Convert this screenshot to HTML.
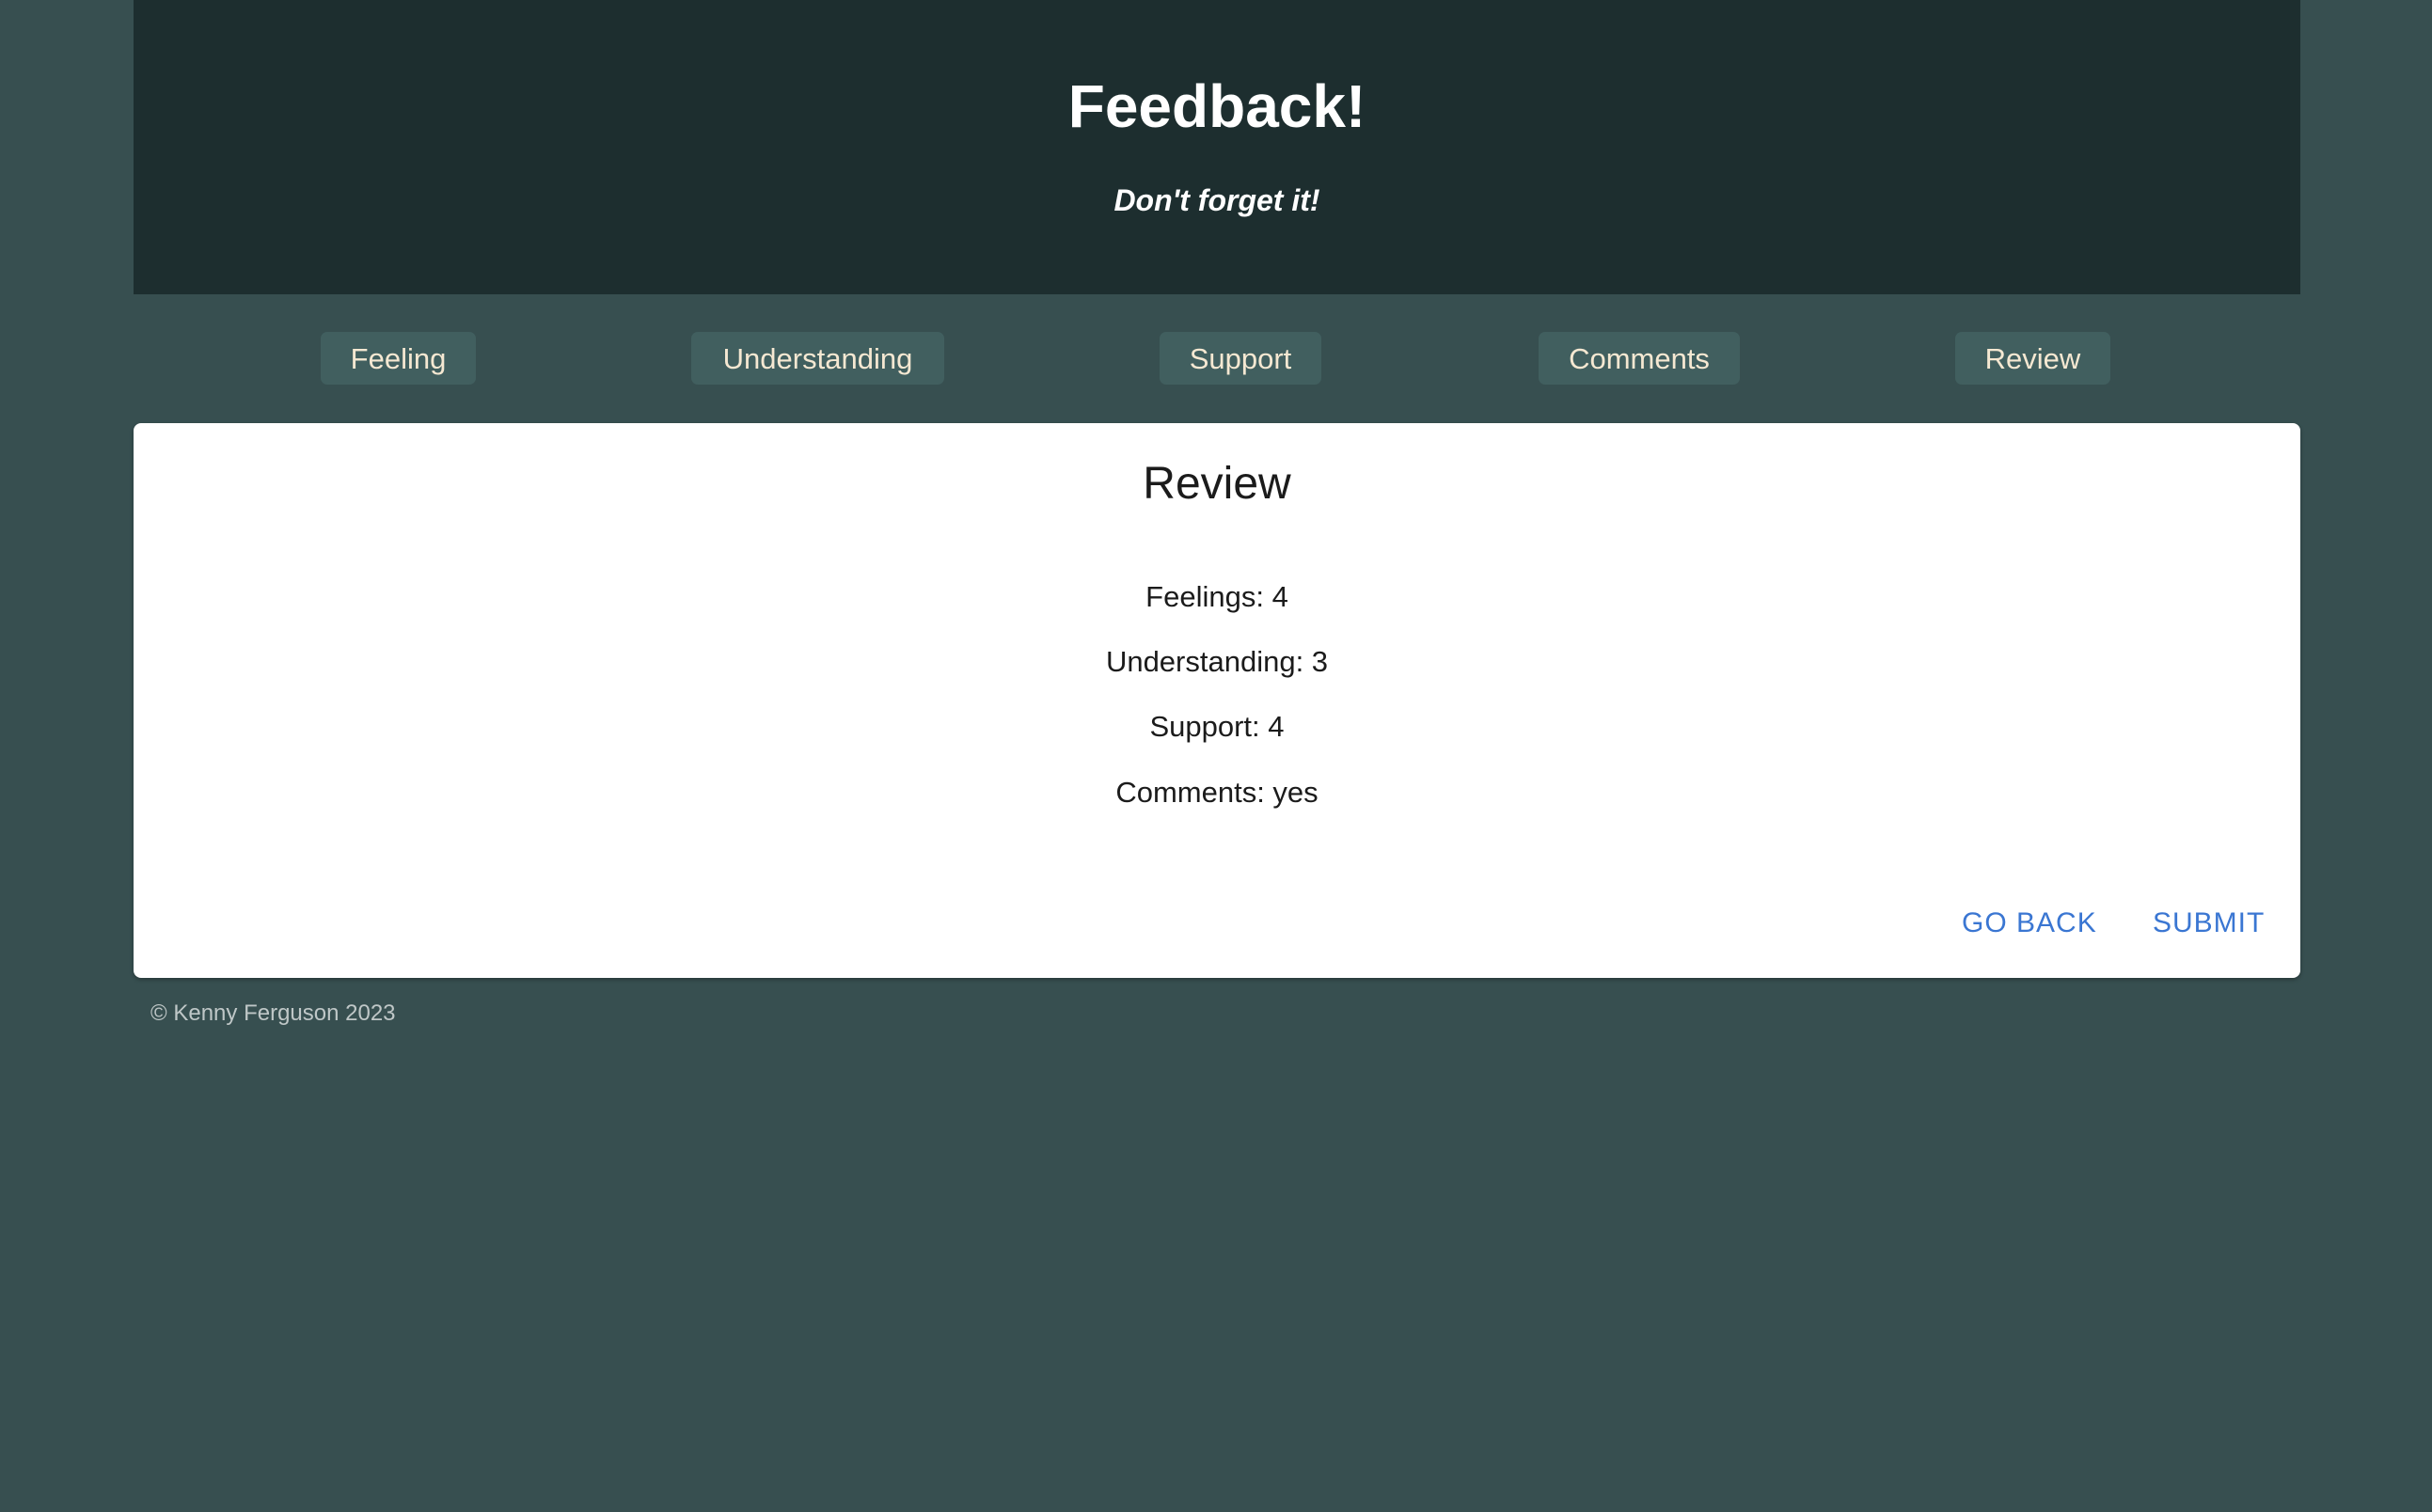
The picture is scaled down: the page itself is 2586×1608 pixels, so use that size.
<!DOCTYPE html>
<html><head><meta charset="utf-8"><style>
html,body{margin:0;padding:0;}
body{width:2586px;height:1608px;background:#374f50;font-family:"Liberation Sans",Arial,sans-serif;position:relative;overflow:hidden;}
.hdr{position:absolute;left:142px;top:0;width:2304px;height:313px;background:#1d2e2f;color:#fff;text-align:center;}
.hdr h1{position:absolute;left:0;right:0;top:76px;margin:0;font-size:64px;font-weight:bold;}
.hdr p{position:absolute;left:0;right:0;top:195px;margin:0;font-size:32px;font-weight:bold;font-style:italic;}
.nav{position:absolute;top:353px;height:56px;background:#415f5f;color:#f5e8d2;border-radius:7px;font-size:31px;line-height:58px;text-align:center;}
.card{position:absolute;left:142px;top:450px;width:2304px;height:590px;background:#fff;border-radius:8px;box-shadow:0 2px 4px rgba(0,0,0,.3);}
.line{position:absolute;left:0;right:0;font-size:31px;}
.btn{position:absolute;top:965px;color:#3a76d2;font-size:30px;letter-spacing:1px;}
.foot{position:absolute;left:160px;top:1064px;color:#bfc7c7;font-size:24px;}
</style></head><body>
<div class="hdr"><h1>Feedback!</h1><p>Don't forget it!</p></div>
<div class="nav" style="left:341px;width:165px">Feeling</div>
<div class="nav" style="left:735px;width:269px">Understanding</div>
<div class="nav" style="left:1233px;width:172px">Support</div>
<div class="nav" style="left:1636px;width:214px">Comments</div>
<div class="nav" style="left:2079px;width:165px">Review</div>
<div class="card"></div>
<div style="position:absolute;left:142px;width:2304px;top:0;text-align:center;color:#1b1b1b">
<div style="position:absolute;left:0;right:0;top:487px;font-size:48px;">Review</div>
<div class="line" style="top:617px">Feelings: 4</div>
<div class="line" style="top:686px">Understanding: 3</div>
<div class="line" style="top:755px">Support: 4</div>
<div class="line" style="top:825px">Comments: yes</div>
</div>
<div class="btn" style="left:2086px">GO BACK</div>
<div class="btn" style="left:2289px">SUBMIT</div>
<div class="foot">© Kenny Ferguson 2023</div>
</body></html>
